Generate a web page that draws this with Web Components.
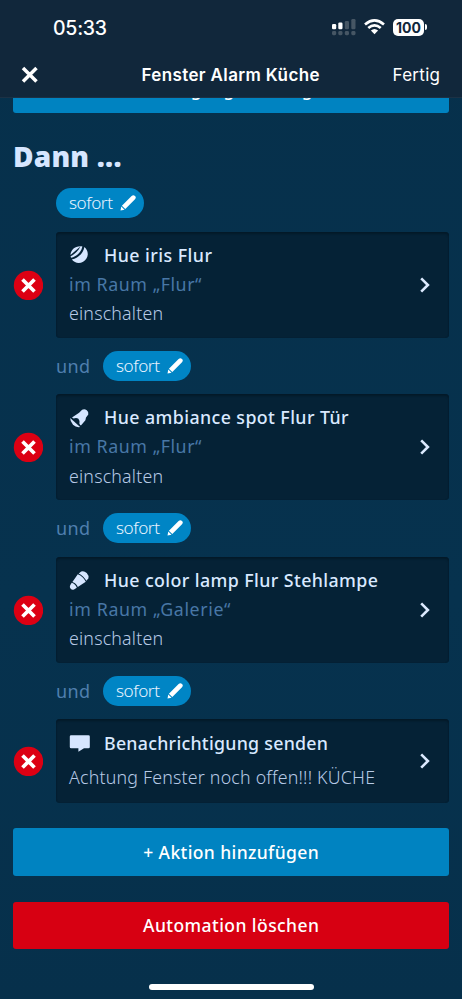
<!DOCTYPE html>
<html lang="de">
<head>
<meta charset="utf-8">
<title>Fenster Alarm Küche</title>
<style>
html,body{margin:0;height:100%;background:#06304b}
</style>
</head>
<body>
<automation-page></automation-page>
<script>
const define = (name, html, init) => {
  const tpl = document.createElement('template');
  tpl.innerHTML = html;
  customElements.define(name, class extends HTMLElement {
    constructor() {
      super();
      this.attachShadow({mode: 'open'}).append(tpl.content.cloneNode(true));
    }
    connectedCallback() { if (init) init(this, this.shadowRoot); }
  });
};

/* Spreads its text over the number of pixels given in "w". */
define('fit-text', `<style>:host{display:inline-block;white-space:nowrap}</style><slot></slot>`, el => {
  const w = parseFloat(el.getAttribute('w'));
  el.style.letterSpacing = '0px';
  const natural = el.getBoundingClientRect().width;
  const n = el.textContent.length;
  if (!natural || n < 2) return;
  const s = (w - natural) / (n - 1);
  el.style.letterSpacing = s.toFixed(3) + 'px';
  el.style.marginRight = (-s).toFixed(3) + 'px';
});

define('status-bar', `<style>
:host{display:flex;height:54px;box-sizing:border-box;padding:0 35px 0 53px;align-items:center;justify-content:space-between;font:500 19.5px/24px Inter,sans-serif;color:#fff}
.time{padding-top:2px}
.icons{display:flex;align-items:center;gap:8px}
svg{display:block}
.bat{display:flex;align-items:center;gap:1px}
.level{width:31px;height:17px;border-radius:5px;background:#fff;color:#11273b;font:700 14px/17px Inter,sans-serif;text-align:center}
.cap{width:2px;height:6px;border-radius:0 3px 3px 0;background:#fff}
</style>
<fit-text class="time" w="54">05:33</fit-text>
<div class="icons">
<svg width="24" height="17" viewBox="0 0 24 17"><g fill="#fff"><rect x="0" y="5" width="4.2" height="5.3" rx="1.2"/><rect x="6.3" y="3.5" width="4.2" height="6.8" rx="1.2"/></g><g fill="#465664"><rect x="12.8" y="2" width="4.2" height="8.3" rx="1.2"/><rect x="19.3" y="0" width="4.2" height="10.3" rx="1.2"/><rect x="0" y="12" width="4.2" height="4.2" rx="1.4"/><rect x="6.3" y="12" width="4.2" height="4.2" rx="1.4"/><rect x="12.8" y="12" width="4.2" height="4.2" rx="1.4"/><rect x="19.3" y="12" width="4.2" height="4.2" rx="1.4"/></g></svg>
<svg width="21" height="16" viewBox="0 0 21 16"><g fill="none" stroke="#fff" stroke-width="2.7"><path d="M1 5.5Q10.5-2.6 20 5.5"/><path d="M4.3 9Q10.5 3.6 16.7 9"/></g><path d="M6.9 11.5Q10.5 8.4 14.1 11.5L10.5 15.3Z" fill="#fff"/></svg>
<div class="bat"><div class="level"><fit-text w="25">100</fit-text></div><div class="cap"></div></div>
</div>`);

define('nav-bar', `<style>
:host{display:grid;grid-template-columns:1fr auto 1fr;align-items:center;height:43px;padding:0 22px 0 21px;font:400 17px/22px Inter,sans-serif;color:#fff;border-bottom:1px solid #1c3145}
svg{display:block;margin-top:-2px}
fit-text{margin-top:-2px}
.title{font-weight:600}
.done{justify-self:end}
</style>
<svg width="18" height="18" viewBox="0 0 18 18"><path d="M2 2 15.5 15.5M15.5 2 2 15.5" stroke="#fff" stroke-width="3.5"/></svg>
<fit-text class="title" w="178">Fenster Alarm Küche</fit-text>
<fit-text class="done" w="47.5">Fertig</fit-text>`);

define('wide-button', `<style>
:host{display:flex;align-items:center;justify-content:center;height:47.5px;border-radius:3px;background:var(--fill,#0083c1);color:#fff;font:500 17.5px/24px "Noto Sans",sans-serif}
</style><slot></slot>`);

define('delay-pill', `<style>
:host{display:inline-flex;align-items:center;box-sizing:border-box;width:88px;height:30px;padding:0 8px 0 13px;justify-content:space-between;border-radius:15px;background:#0085c5;color:#e9f3ff;font:350 17.2px/24px "Noto Sans",sans-serif}
svg{display:block}
</style>
<fit-text w="44">sofort</fit-text>
<svg width="16" height="16" viewBox="0 0 16 16"><path d="M.5 15.5 1.3 11.5 4.5 14.7Z M1.9 10.7 11.6 1Q13.4-.4 15 1T15 4.3L5.3 14Z" fill="#fff"/></svg>`);

define('delay-row', `<style>
:host{display:flex;align-items:center;height:30px;margin-left:56px;gap:13px;color:#4f7fae;font:400 18px/24px "Noto Sans",sans-serif}
</style><slot></slot><delay-pill></delay-pill>`);

const icons = {
  iris: '<path d="M14.6 1.2C18 4 19 8.8 16.8 12.5 13.8 17.6 6.4 19.3 2 13.8 8.6 12 13.6 7.4 14.6 1.2Z"/><path d="M12.6.6C11.4 6.2 7.2 10.6 1.2 12L.8 10.4C5 8.6 8.6 5.2 10.6.8L.7 9.2C.8 4 5.6-.4 12.6.6Z"/>',
  spot: '<path d="M2.2 8.6 9.3 3.9 12.3 1Q14.6-.5 17 1.5T18.5 5.7L16.2 8.8 15.6 11.4 10.9 17 9.6 15.8Q10.4 11.8 8.6 10 6.6 8.3 3.6 9.8Z"/><path d="M.4 9.2 10.3 18.2Q6.3 18.9 3.2 15.9.3 12.8.4 9.2Z"/><path d="M4 10.9Q6.3 9.8 7.7 11 9 12.4 8.6 15Z" fill="#052236"/><path d="M2.2 9.2 11 17" stroke="#052236" stroke-width=".8"/>',
  lamp: '<path d="M8.9 2.7 11.4.8Q14-.4 16.9 2.3 19.5 5 18.6 7.8L16.5 10Q15.2 7.8 13.2 5.8 11.2 3.9 8.9 2.7Z"/><path d="M8 3.5Q10.8 4.7 12.7 6.5 14.7 8.4 16 11L8 16.3Q7.3 14.4 5.8 13 4.5 11.7 2.6 11.1Z"/><path d="M1.9 12Q3.8 12.6 5.2 13.9 6.5 15.3 7 17L4.2 18.6Q2.3 19.4.9 18-.4 16.6.3 14.7Z"/>',
  message: '<path d="M1.3 1.5H18.7Q20 1.5 20 2.8V13.2Q20 14.5 18.7 14.5H14.2L8.6 18V14.5H1.3Q0 14.5 0 13.2V2.8Q0 1.5 1.3 1.5Z"/>'
};

define('action-card', `<style>
:host{display:grid;grid-template-columns:30px 393px;column-gap:13px;align-items:center;margin-left:13px;font:400 17.8px/29.3px "Noto Sans",sans-serif;height:var(--h,106px)}
.remove,.go,.icon{display:block}
.card{display:flex;align-items:center;justify-content:space-between;height:100%;box-sizing:border-box;padding:0 19px 0 13px;border-radius:4px;background:#052236;box-shadow:inset 0 2px 2px #041a29,inset 0 0 1px #041c2d}
.text{display:flex;flex-direction:column;margin-bottom:.4px}
.head{display:flex;align-items:center;color:#d9e9ff;font-weight:500}
.icon{width:35px;height:20px;fill:#d6e6ff}
.place{color:#4877a6}
.state{color:#b7cae6;font-weight:300}
:host([tall]) .state{padding-top:5.5px}
</style>
<svg class="remove" width="30" height="30" viewBox="0 0 30 30"><circle cx="15.5" cy="15.5" r="14.7" fill="#dc0013"/><path d="M9.5 9.5 21.5 21.5M21.5 9.5 9.5 21.5" stroke="#fff" stroke-width="3.7"/></svg>
<div class="card"><div class="text">
<div class="head"><svg class="icon" viewBox="0 0 35 20"></svg><slot name="title"></slot></div>
<div class="place"><slot name="place"></slot></div>
<div class="state"><slot></slot></div>
</div>
<svg class="go" width="10" height="16" viewBox="0 0 10 16"><path d="M1.2 1.3 7.9 8 1.2 14.7" fill="none" stroke="#dceaff" stroke-width="2.6"/></svg></div>`,
(el, root) => {
  root.querySelector('.icon').innerHTML = '<g transform="translate(.8 .8)">' + icons[el.getAttribute('icon')] + '</g>';
});

define('automation-page', `<style>
:host{display:flex;flex-direction:column;height:999px;width:462px;overflow:hidden;background:linear-gradient(#06304b,#06324e 60%,#06304b)}
header{background:#11273b;flex:none}
main{flex:1;min-height:0;overflow:hidden;display:flex;flex-direction:column}
main>*{flex:none}
wide-button{margin:0 13px}
.first{margin-top:-32.5px}
h2{margin:24px 0 0 13px;height:38px;font:900 28px/38px "Noto Sans",sans-serif;color:#d6e6ff}
delay-row{margin-top:13.2px}
delay-row+action-card{margin-top:13.3px}
delay-row.start{margin-top:13.4px}
.add{margin-top:25.7px}
.delete{margin-top:25.8px;--fill:#d70012}
.home{height:6px;width:165px;border-radius:3px;background:#fff;margin:35px 0 0 149px}
</style>
<header><status-bar></status-bar><nav-bar></nav-bar></header>
<main>
<wide-button class="first"><fit-text w="205">+ Bedingung hinzufügen</fit-text></wide-button>
<h2><fit-text w="108.5">Dann ...</fit-text></h2>
<delay-row class="start"></delay-row>
<action-card icon="iris"><fit-text slot="title" w="108">Hue iris Flur</fit-text><fit-text slot="place" w="132.5">im Raum „Flur“</fit-text><fit-text w="94">einschalten</fit-text></action-card>
<delay-row><fit-text w="34">und</fit-text></delay-row>
<action-card icon="spot"><fit-text slot="title" w="244.5">Hue ambiance spot Flur Tür</fit-text><fit-text slot="place" w="132.5">im Raum „Flur“</fit-text><fit-text w="94">einschalten</fit-text></action-card>
<delay-row><fit-text w="34">und</fit-text></delay-row>
<action-card icon="lamp"><fit-text slot="title" w="274">Hue color lamp Flur Stehlampe</fit-text><fit-text slot="place" w="161.5">im Raum „Galerie“</fit-text><fit-text w="94">einschalten</fit-text></action-card>
<delay-row><fit-text w="34">und</fit-text></delay-row>
<action-card icon="message" tall style="--h:83.5px"><fit-text slot="title" w="224">Benachrichtigung senden</fit-text><fit-text w="306">Achtung Fenster noch offen!!! KÜCHE</fit-text></action-card>
<wide-button class="add"><fit-text w="175.5">+ Aktion hinzufügen</fit-text></wide-button>
<wide-button class="delete"><fit-text w="176">Automation löschen</fit-text></wide-button>
<div class="home"></div>
</main>`);
</script>
</body>
</html>
